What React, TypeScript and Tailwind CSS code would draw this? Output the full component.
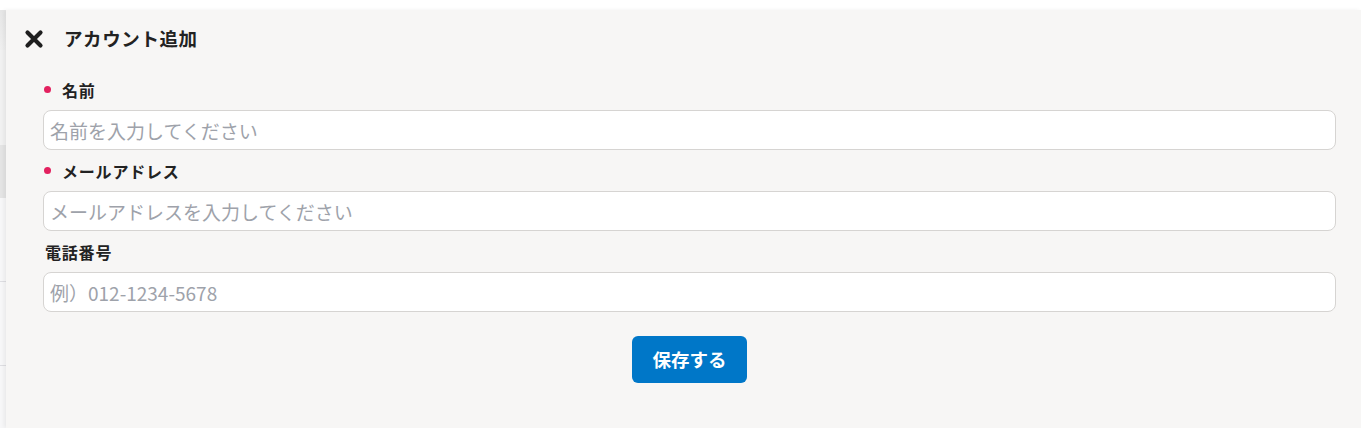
const font = { fontFamily: '"Noto Sans CJK JP", "Noto Sans", sans-serif' };

function Label({ text, required }: { text: string; required?: boolean }) {
  return (
    <div className="flex items-center h-[24px] mb-[7px] pb-[3px]">
      {required ? (
        <>
          <span className="ml-[1px] w-[7px] h-[7px] rounded-full bg-[#e3215f]" />
          <span className="ml-[11px] text-[16px] font-bold tracking-[0.8px] text-[#222]">{text}</span>
        </>
      ) : (
        <span className="ml-[2px] text-[16px] font-bold tracking-[0.8px] text-[#222]">{text}</span>
      )}
    </div>
  );
}

function Field({ label, placeholder, required }: { label: string; placeholder: string; required?: boolean }) {
  return (
    <div>
      <Label text={label} required={required} />
      <input
        placeholder={placeholder}
        className="block w-full h-[40px] px-[6px] rounded-[8px] border border-[#d6d4d2] bg-white text-[19px] text-[#333] placeholder:text-[#9ea2aa] outline-none"
        style={font}
      />
    </div>
  );
}

export default function App() {
  return (
    <div className="w-full h-[428px] flex flex-col bg-white" style={font}>
      <div className="h-[10px] bg-white" />
      <div className="flex flex-1">
        {/* page behind the drawer */}
        <div className="w-[6px] flex flex-col">
          <div className="h-[40px] bg-gradient-to-b from-[#e6e6e6] to-[#efefef]" />
          <div className="h-[95px] bg-[#f1f1f1]" />
          <div className="h-[53px] bg-[#e4e4e4]" />
          <div className="h-[84px] bg-[#f7f7f8] border-b border-[#dedee2]" />
          <div className="h-[84px] bg-[#f7f7f8] border-b border-[#dedee2]" />
          <div className="flex-1 bg-[#f7f7f8]" />
        </div>

        {/* drawer */}
        <div className="flex-1 bg-[#f7f6f5] shadow-[-2px_0_4px_rgba(0,0,0,0.06)]">
          <div className="h-[60px] flex items-center pl-[18px] pb-[2px]">
            <svg width="20" height="20" viewBox="0 0 20 20">
              <path d="M3.5 3.5 L16.5 16.5 M16.5 3.5 L3.5 16.5" stroke="#1e1e1e" strokeWidth="4.2" strokeLinecap="round" />
            </svg>
            <span className="ml-[20px] text-[18.5px] font-bold tracking-[0.6px] text-[#222]">アカウント追加</span>
          </div>

          <div className="pt-[9px] pl-[37px] pr-[25px] flex flex-col gap-[10px]">
            <Field label="名前" placeholder="名前を入力してください" required />
            <Field label="メールアドレス" placeholder="メールアドレスを入力してください" required />
            <Field label="電話番号" placeholder="例）012-1234-5678" />
          </div>

          <div className="flex justify-center mt-[24px]">
            <button className="ml-[12px] w-[115px] h-[47px] rounded-[6px] bg-[#0077c8] text-white text-[18.5px] font-bold">
              保存する
            </button>
          </div>
        </div>
      </div>
    </div>
  );
}
